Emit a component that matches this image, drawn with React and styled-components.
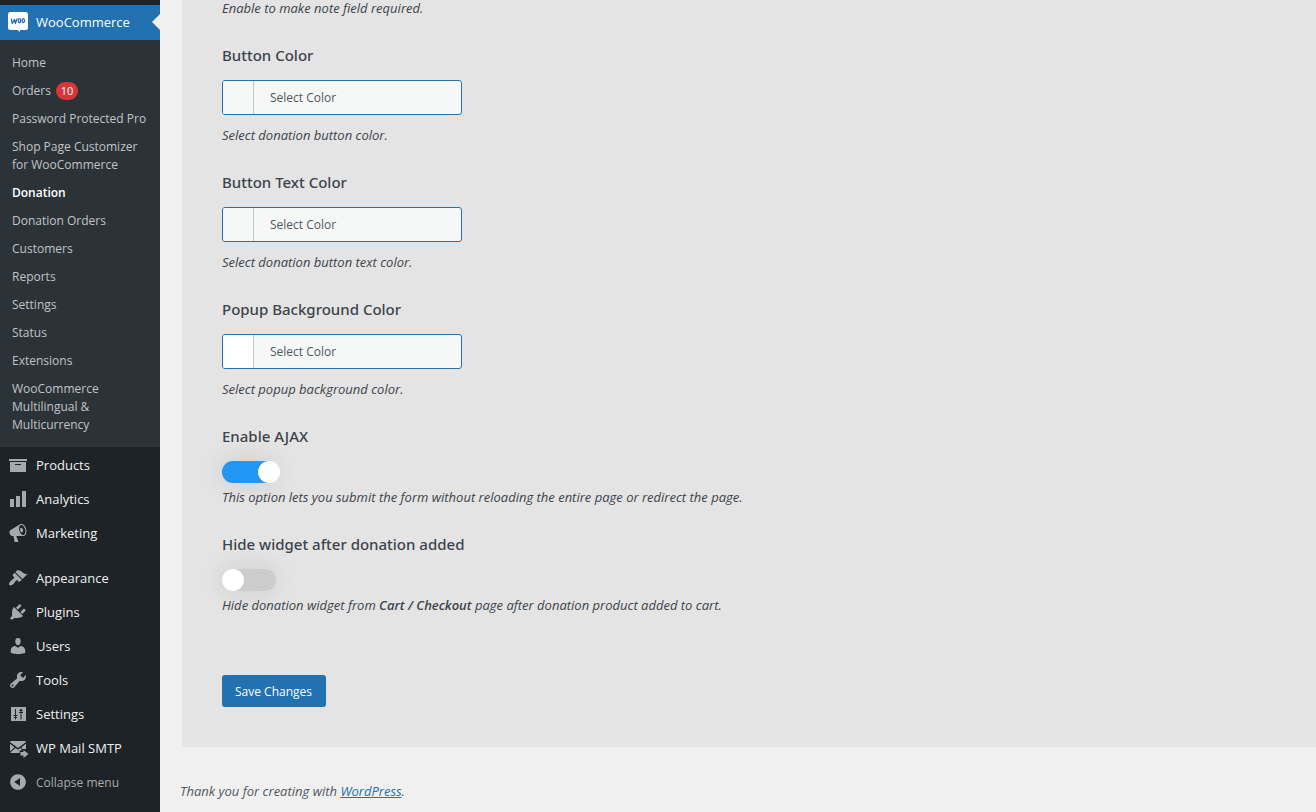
import React, { useState } from 'react';
import styled, { createGlobalStyle, ThemeProvider } from 'styled-components';

const theme = {
  colors: {
    page: '#f0f0f0',
    panel: '#e4e4e4',
    menu: '#1d2327',
    submenu: '#2c3338',
    accent: '#2271b1',
    icon: '#a7aaad',
    text: '#3c434a',
    muted: '#50575e',
    badge: '#d63638',
    toggle: '#2196f3'
  }
};

const GlobalStyle = createGlobalStyle`
  * {
    box-sizing: border-box;
  }

  body {
    margin: 0;
    background: ${theme.colors.page};
    color: ${theme.colors.text};
    font-family: 'Open Sans', 'Noto Sans', sans-serif;
    font-size: 12px;
  }

  ul {
    margin: 0;
    padding: 0;
    list-style: none;
  }
`;

const Layout = styled.div`
  display: flex;
  min-height: 100vh;
`;

const Sidebar = styled.nav`
  flex: none;
  width: 160px;
  padding-top: 5px;
  background: ${({ theme: { colors } }) => colors.menu};
`;

const MenuGroup = styled.ul`
  padding: 1px 0 10px;
`;

const MenuLink = styled.a`
  display: flex;
  align-items: center;
  height: 34px;
  padding-left: 8px;
  gap: 8px;
  color: #f0f0f1;
  font-size: 13px;
  text-decoration: none;
`;

const CurrentLink = styled(MenuLink)`
  position: relative;
  height: 35px;
  padding-bottom: 2px;
  color: #fff;
  background: ${({ theme: { colors } }) => colors.accent};

  &::after {
    content: '';
    position: absolute;
    right: 0;
    border: 8px solid transparent;
    border-right-color: ${({ theme: { colors } }) => colors.page};
  }
`;

const CollapseButton = styled.button`
  display: flex;
  align-items: center;
  width: 100%;
  height: 34px;
  padding: 0 0 0 8px;
  gap: 8px;
  border: 0;
  background: none;
  color: ${({ theme: { colors } }) => colors.icon};
  font-family: inherit;
  font-size: 12px;
`;

const Icon = styled.svg`
  flex: none;
  width: 20px;
  height: 20px;
  fill: ${({ theme: { colors } }) => colors.icon};
`;

const Submenu = styled.ul`
  padding: 9px 0 8px;
  background: ${({ theme: { colors } }) => colors.submenu};
`;

const SubmenuLink = styled.a`
  display: block;
  padding: 5px 8px 5px 12px;
  color: ${({ $current }) => ($current ? '#fff' : '#c0c3c6')};
  font-weight: ${({ $current }) => ($current ? 600 : 400)};
  line-height: 18px;
  text-decoration: none;
`;

const Badge = styled.span`
  display: inline-block;
  min-width: 22px;
  margin-left: 5px;
  border-radius: 9px;
  background: ${({ theme: { colors } }) => colors.badge};
  color: #fff;
  font-size: 11px;
  text-align: center;
`;

const Main = styled.main`
  flex: 1;
  min-width: 0;
`;

const Panel = styled.form`
  margin-left: 22px;
  padding: 1px 40px 40px;
  background: ${({ theme: { colors } }) => colors.panel};
`;

const Field = styled.div`
  margin-bottom: 29px;
`;

const Title = styled.h3`
  display: block;
  margin: 0 0 14px;
  font-family: 'Noto Sans', 'Open Sans', sans-serif;
  font-size: 15px;
  font-weight: 500;
  line-height: 22px;
`;

const Description = styled.p`
  margin: 0;
  padding-top: ${({ $space = 0 }) => $space}px;
  font-size: 13px;
  font-style: italic;
  line-height: 14px;

  strong {
    font-weight: 600;
  }
`;

const ColorButton = styled.button`
  display: flex;
  align-items: stretch;
  width: 240px;
  height: 35px;
  padding: 0;
  overflow: hidden;
  border: 1px solid ${({ theme: { colors } }) => colors.accent};
  border-radius: 3px;
  background: #f6f7f7;
  color: ${({ theme: { colors } }) => colors.muted};
  font-family: inherit;
  font-size: 12px;
  text-align: left;
`;

const Swatch = styled.span`
  width: 30px;
  background: ${({ $color }) => $color};
`;

const ColorLabel = styled.span`
  flex: 1;
  padding-left: 16px;
  border-left: 1px solid #c3c4c7;
  line-height: 33px;
`;

const Toggle = styled.input.attrs({ type: 'checkbox', role: 'switch' })`
  appearance: none;
  display: block;
  width: 54px;
  height: 22px;
  margin: 0;
  border-radius: 11px;
  background: #ccc;
  box-shadow: 0 0 25px rgba(0, 0, 0, 0.12);

  &::before {
    content: '';
    display: block;
    width: 22px;
    height: 22px;
    border-radius: 50%;
    background: #fff;
  }

  &:checked {
    background: ${({ theme: { colors } }) => colors.toggle};
  }

  &:checked::before {
    margin-left: 36px;
  }
`;

const SaveButton = styled.button`
  height: 32px;
  margin-top: 34px;
  padding: 0 14px 0 13px;
  border: 0;
  border-radius: 3px;
  background: ${({ theme: { colors } }) => colors.accent};
  color: #fff;
  font-family: inherit;
  font-size: 12px;
`;

const Footer = styled.footer`
  padding: 34px 20px 1px;
  color: ${({ theme: { colors } }) => colors.muted};
  font-size: 13px;
  font-style: italic;
  line-height: 20px;

  a {
    color: ${({ theme: { colors } }) => colors.accent};
  }
`;

const submenu = [
  { label: 'Home' },
  { label: 'Orders', count: 10 },
  { label: 'Password Protected Pro' },
  { label: 'Shop Page Customizer for WooCommerce' },
  { label: 'Donation', current: true },
  { label: 'Donation Orders' },
  { label: 'Customers' },
  { label: 'Reports' },
  { label: 'Settings' },
  { label: 'Status' },
  { label: 'Extensions' },
  { label: 'WooCommerce Multilingual & Multicurrency' }
];

const menuGroups = [
  [
    {
      label: 'Products',
      path: 'M19 4v2H1V4h18zM2 7h16v10H2V7zm11 3V9H7v1h6z'
    },
    {
      label: 'Analytics',
      path: 'M18 18V2h-4v16h4zm-6 0V7H8v11h4zm-6 0v-8H2v8h4z'
    },
    {
      label: 'Marketing',
      path:
        'M18.15 5.94c.46 1.62.38 3.22-.02 4.48-.42 1.28-1.26 2.18-2.3 2.48-.16.06-.26.06-.4.06-.06.02-.12.02-.18.02-.06.02-.14.02-.22.02h-6.8l2.22 5.5c.02.14-.06.26-.14.34-.08.1-.24.16-.34.16H6.95c-.1 0-.26-.06-.34-.16-.08-.08-.16-.2-.14-.34l-1-5.5H4.25l-.02-.02c-.5.06-1.08-.18-1.54-.62s-.88-1.08-1.06-1.88c-.24-.8-.2-1.56-.02-2.2.18-.62.58-1.08 1.06-1.3l.02-.02 9-5.4c.1-.06.18-.1.24-.16.06-.04.14-.08.24-.12.16-.08.28-.12.5-.18 1.04-.3 2.24.1 3.22.98s1.84 2.24 2.26 3.86zm-2.58 5.98h-.02c.4-.1.74-.34 1.04-.7.58-.7.86-1.76.86-3.04 0-.64-.1-1.3-.28-1.98-.34-1.36-1.02-2.5-1.78-3.24s-1.68-1.1-2.46-.88c-.82.22-1.4.96-1.7 2-.32 1.04-.28 2.36.06 3.72.38 1.36 1 2.5 1.8 3.24.78.74 1.62 1.1 2.48.88zm-2.54-7.08c.22-.04.42-.02.62.04.38.16.76.48 1.02 1s.42 1.2.42 1.78c0 .3-.04.56-.12.8-.18.48-.44.84-.86.94-.34.1-.8-.06-1.14-.4s-.64-.86-.78-1.5c-.18-.62-.12-1.24.02-1.72s.48-.84.82-.94z'
    }
  ],
  [
    {
      label: 'Appearance',
      path:
        'M14.48 11.06L7.41 3.99l1.5-1.5c.5-.56 2.3-.47 3.51.32 1.21.8 1.43 1.28 2.91 2.1 1.18.64 2.45 1.26 4.45.85zm-.71.71L6.7 4.7 4.93 6.47c-.39.39-.39 1.02 0 1.41l1.06 1.06c.39.39.39 1.03 0 1.42-.6.6-1.43 1.11-2.21 1.69-.35.26-.7.53-1.01.84C1.43 14.23.4 16.08 1.4 17.07c.99 1 2.84-.03 4.18-1.36.31-.31.58-.66.85-1.02.57-.78 1.08-1.61 1.69-2.21.39-.39 1.02-.39 1.41 0l1.06 1.06c.39.39 1.02.39 1.41 0z'
    },
    {
      label: 'Plugins',
      path:
        'M13.11 4.36L9.87 7.6 8 5.73l3.24-3.24c.35-.34 1.05-.2 1.56.32.52.51.66 1.21.31 1.55zm-8 1.77l.91-1.12 9.01 9.01-1.19.84c-.71.71-2.63 1.16-3.82 1.16H6.14L4.9 17.26c-.59.59-1.54.59-2.12 0-.59-.58-.59-1.53 0-2.12l1.24-1.24v-3.88c0-1.13.4-3.19 1.09-3.89zm7.26 3.97l3.24-3.24c.34-.35 1.04-.21 1.55.31.52.51.66 1.21.31 1.55l-3.24 3.25z'
    },
    {
      label: 'Users',
      path:
        'M10 9.25c-2.27 0-2.73-3.44-2.73-3.44C7 4.02 7.82 2 9.97 2c2.16 0 2.98 2.02 2.71 3.81 0 0-.41 3.44-2.68 3.44zm0 2.57L12.72 10c2.39 0 4.52 2.33 4.52 4.53v2.49s-3.65 1.13-7.24 1.13c-3.65 0-7.24-1.13-7.24-1.13v-2.49c0-2.25 1.94-4.48 4.47-4.48z'
    },
    {
      label: 'Tools',
      path:
        'M16.68 9.77c-1.34 1.34-3.3 1.67-4.95.99l-5.41 6.52c-.99.99-2.59.99-3.58 0s-.99-2.59 0-3.57l6.52-5.42c-.68-1.65-.35-3.61.99-4.95 1.28-1.28 3.12-1.62 4.72-1.06l-2.89 2.89 2.82 2.82 2.86-2.87c.53 1.58.18 3.39-1.08 4.65zM3.81 16.21c.4.39 1.04.39 1.43 0 .4-.4.4-1.04 0-1.43-.39-.4-1.03-.4-1.43 0-.39.39-.39 1.03 0 1.43z'
    },
    {
      label: 'Settings',
      path:
        'M3 3h15v14H3zM7 5v6H5.500v1H7v1h-1v1h1v1.500h1V14h1v-1H8v-1h1.500v-1H8V5zM13 4.500l-2 2.500h1.500v1H11v1h1.500v6.500h1V9H15V8h-1.500V7H15z'
    },
    {
      label: 'WP Mail SMTP',
      path:
        'M3 3h14a1 1 0 0 1 1 1l-8 6-8-6a1 1 0 0 1 1-1zM2 5.800l4.500 3.400L2 13.500zM18 5.800v5.200h-4l-.5-1.800zM7.600 10l2.400 1.800 2.400-1.800 1 1v1.500H11.500V15H3a1 1 0 0 1-.8-.4zM15.500 12l5 4-5 4v-2.500h-3v-3.500h3z'
    }
  ]
];

const collapsePath =
  'M10 2.16c4.33 0 7.84 3.51 7.84 7.84s-3.51 7.84-7.84 7.84S2.16 14.33 2.16 10 5.71 2.16 10 2.16zm2 11.72V6.12L6.18 9.97z';

function MenuIcon({ path }) {
  return (
    <Icon viewBox="0 0 20 20" overflow="visible" aria-hidden="true">
      <path fillRule="evenodd" d={path} />
    </Icon>
  );
}

function WooIcon() {
  return (
    <Icon viewBox="0 0 20 20" aria-hidden="true">
      <path
        fill="#fff"
        d="M2.500 0h15A2.500 2.500 0 0 1 20 2.500v13a2.500 2.500 0 0 1-2.500 2.500H12v2l-2.500-2h-7A2.500 2.500 0 0 1 0 15.500v-13A2.500 2.500 0 0 1 2.500 0z"
      />
      <g fill="none" stroke="#2271b1" strokeWidth="1.300" strokeLinejoin="round">
        <path d="M3.300 6.500l.9 5 2.300-4 .9 4 1.700-5" />
        <ellipse cx="11.500" cy="8.700" rx="1.200" ry="2" />
        <ellipse cx="15.300" cy="8.700" rx="1.200" ry="2" />
      </g>
    </Icon>
  );
}

function ColorField({ title, description, color }) {
  return (
    <Field>
      <Title>{title}</Title>
      <ColorButton type="button" aria-label={`${title}: Select Color`}>
        <Swatch $color={color} />
        <ColorLabel>Select Color</ColorLabel>
      </ColorButton>
      <Description $space={13}>{description}</Description>
    </Field>
  );
}

function ToggleField({ id, title, initial = false, children }) {
  const [checked, setChecked] = useState(initial);

  return (
    <Field>
      <Title as="label" htmlFor={id}>
        {title}
      </Title>
      <Toggle id={id} checked={checked} onChange={() => setChecked(!checked)} />
      <Description $space={7}>{children}</Description>
    </Field>
  );
}

export default function App() {
  return (
    <ThemeProvider theme={theme}>
      <GlobalStyle />
      <Layout>
        <Sidebar>
          <CurrentLink href="#woocommerce">
            <WooIcon />
            WooCommerce
          </CurrentLink>
          <Submenu>
            {submenu.map(({ label, count, current }) => (
              <li key={label}>
                <SubmenuLink href="#submenu" $current={current}>
                  {label}
                  {count && <Badge>{count}</Badge>}
                </SubmenuLink>
              </li>
            ))}
          </Submenu>
          {menuGroups.map((items, index) => (
            <MenuGroup key={items[0].label}>
              {items.map(({ label, path }) => (
                <li key={label}>
                  <MenuLink href="#menu">
                    <MenuIcon path={path} />
                    {label}
                  </MenuLink>
                </li>
              ))}
              {index === menuGroups.length - 1 && (
                <li>
                  <CollapseButton type="button">
                    <MenuIcon path={collapsePath} />
                    Collapse menu
                  </CollapseButton>
                </li>
              )}
            </MenuGroup>
          ))}
        </Sidebar>
        <Main>
          <Panel>
            <Field>
              <Description>Enable to make note field required.</Description>
            </Field>
            <ColorField
              title="Button Color"
              description="Select donation button color."
              color="#f6f7f7"
            />
            <ColorField
              title="Button Text Color"
              description="Select donation button text color."
              color="#f6f7f7"
            />
            <ColorField
              title="Popup Background Color"
              description="Select popup background color."
              color="#fff"
            />
            <ToggleField id="ajax" title="Enable AJAX" initial>
              This option lets you submit the form without reloading the entire
              page or redirect the page.
            </ToggleField>
            <ToggleField id="hide-widget" title="Hide widget after donation added">
              Hide donation widget from <strong>Cart / Checkout</strong> page
              after donation product added to cart.
            </ToggleField>
            <SaveButton type="button">Save Changes</SaveButton>
          </Panel>
          <Footer>
            Thank you for creating with <a href="#wordpress">WordPress</a>.
          </Footer>
        </Main>
      </Layout>
    </ThemeProvider>
  );
}
